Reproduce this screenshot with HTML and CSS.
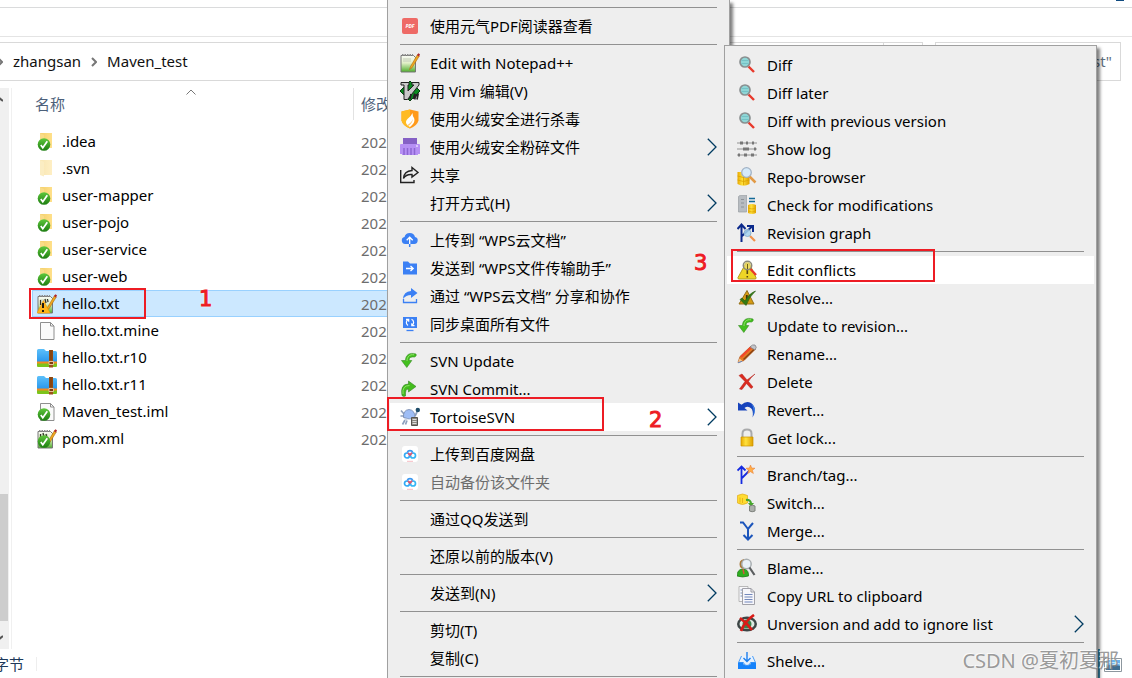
FILE: index.html
```html
<!DOCTYPE html>
<html lang="zh-CN">
<head>
    <meta charset="UTF-8">
    <meta name="viewport" content="width=device-width, initial-scale=1.0">
    <title>Maven_test</title>
    <link rel="stylesheet" href="styles.css">
</head>
<body>
    <!-- shared icons -->
    <svg class="sprite" aria-hidden="true">
        <defs>
            <linearGradient id="gFolder" x1="0" y1="0" x2="1" y2="0"><stop offset="0" stop-color="#f3cf6b"/><stop offset="1" stop-color="#ffe08a"/></linearGradient>
            <linearGradient id="gGreen" x1="0" y1="0" x2="0" y2="1"><stop offset="0" stop-color="#5fc83c"/><stop offset="1" stop-color="#1d7d12"/></linearGradient>
            <linearGradient id="gGold" x1="0" y1="0" x2="1" y2="0"><stop offset="0" stop-color="#e8a800"/><stop offset=".4" stop-color="#ffe13d"/><stop offset="1" stop-color="#e0a000"/></linearGradient>
            <linearGradient id="gBlue" x1="0" y1="0" x2="0" y2="1"><stop offset="0" stop-color="#5cc0fa"/><stop offset="1" stop-color="#2a97ec"/></linearGradient>
            <linearGradient id="gNote" x1="0" y1="0" x2="0" y2="1"><stop offset="0" stop-color="#f8faf4"/><stop offset=".45" stop-color="#e2f0c8"/><stop offset="1" stop-color="#4fae2c"/></linearGradient>
        </defs>
        <symbol id="check" viewBox="0 0 20 20">
            <circle cx="7" cy="12.500" r="6.300" fill="url(#gGreen)"/>
            <path d="M3.800 13l2 2.800L10.300 9.200" fill="none" stroke="#fff" stroke-width="1.700"/>
        </symbol>
        <symbol id="folder" viewBox="0 0 20 20">
            <path d="M3 1h12v15H3z" fill="url(#gFolder)"/>
            <path d="M3 1l4 2v14.500L3 16z" fill="#f9dc88"/>
        </symbol>
        <symbol id="page" viewBox="0 0 20 20">
            <path d="M3.500 1.500h10l3.500 3.500v13.500H3.500z" fill="#fafafa" stroke="#8e8e8e"/>
            <path d="M13.500 1.500V5H17" fill="none" stroke="#8e8e8e"/>
        </symbol>
        <symbol id="npp" viewBox="0 0 20 20">
            <path d="M1 2.500h12.500l2 2V19H1z" fill="url(#gNote)" stroke="#777"/>
            <path d="M2 2h11" stroke="#8c8c8c" stroke-width="2" stroke-dasharray="1.500 1"/>
            <path d="M3 6h8M3 8h8" stroke="#c2cab8"/>
            <path d="M17.500 1.500L10.500 13.500l-1 3 2.500-1.700L19.300 3z" fill="#f0a81f" stroke="#a96c10" stroke-width=".6"/>
            <path d="M17 2.200l1.300-2 1.700 1-1 2.200z" fill="#b0272f"/>
        </symbol>
        <symbol id="zip" viewBox="0 0 20 20">
            <path d="M0 2.500Q0 1 1.500 1H7l2 2h9.500Q20 3 20 4.500V14H0z" fill="url(#gBlue)"/>
            <path d="M0 13.500h20V16H0z" fill="#f58a1f"/>
            <path d="M0 15.500h20V18q0 1-1 1H1q-1 0-1-1z" fill="#7cc41c"/>
            <path d="M12 2h4v17.500h-4z" fill="#9c5218"/>
            <path d="M12.500 3h3M12.500 5h3M12.500 7h3M12.500 9h3M12.500 11h3" stroke="#693209" stroke-width=".8"/>
            <path d="M12 13.500h4.500v3H12z" fill="#7c3b0c" stroke="#e6c39b"/>
        </symbol>
        <symbol id="lens" viewBox="0 0 20 20">
            <path d="M11.500 11.500l5.500 5.500" stroke="#e8392b" stroke-width="2.400"/>
            <circle cx="8" cy="7" r="5" fill="#8fd6d6" stroke="#8a8f90" stroke-width="1.700"/>
            <path d="M4.500 5.500h7M4.500 8.500h7" stroke="#74c2c6"/>
        </symbol>
        <symbol id="arrowDown" viewBox="0 0 20 20">
            <path d="M16 3C9.500 1 5.500 4 5.500 9.500H1.500l5.300 7 5-7H9c0-3 2-4 5.500-3.500q2.500-1 1.500-3z" fill="#43c01e" stroke="#368c24" stroke-width=".6"/>
            <path d="M14 3.800C9.500 3 7 6 7 10" fill="none" stroke="#8fe168"/>
        </symbol>
        <symbol id="baidu" viewBox="0 0 20 20">
            <rect x="2" y="2" width="16" height="16" rx="3" fill="#fff"/>
            <circle cx="7" cy="11.500" r="2.500" fill="none" stroke="#31a9f5" stroke-width="1.700"/>
            <circle cx="13" cy="11.500" r="2.500" fill="none" stroke="#35b6f5" stroke-width="1.700"/>
            <path d="M7.200 8.500A3 3 0 0 1 12.800 8.500" fill="none" stroke="#3b97f0" stroke-width="1.700"/>
            <path d="M8 9L10 11 12 8.800" fill="none" stroke="#f34e65" stroke-width="1.700"/>
            <path d="M7 17.300h6" stroke="#f5bcc3"/>
        </symbol>
        <symbol id="chevron" viewBox="0 0 10 18">
            <path d="M.8 .8L9 9 .8 17.200" fill="none" stroke="#003b61" stroke-width="1.300"/>
        </symbol>
    </svg>

    <div class="tabs"><span class="help"></span></div>
    <div class="ribbon"></div>
    <div class="navbar">
        <nav class="address">
            <svg class="crumb first" viewBox="0 0 6 10"><path d="M1 1l4 4-4 4"/></svg>
            <a href="#">zhangsan</a>
            <svg class="crumb" viewBox="0 0 6 10"><path d="M1 1l4 4-4 4"/></svg>
            <a href="#">Maven_test</a>
            <button class="refresh" type="button" aria-label="refresh"></button>
        </nav>
        <input class="search" type="text" value="st&quot;" aria-label="search">
    </div>

    <main class="explorer">
        <div class="scrollbar">
            <svg class="scroll-arrow" viewBox="0 0 10 6"><path d="M0 5l5-4 5 4"/></svg>
            <div class="thumb"></div>
            <svg class="scroll-arrow" viewBox="0 0 10 6"><path d="M0 1l5 4 5-4"/></svg>
        </div>
        <div class="list">
            <table class="files">
                <thead>
                    <tr>
                        <th class="col-name"><div class="head">名称<svg class="sort" viewBox="0 0 10 6"><path d="M.5 5.500L5 1l4.500 4.500"/></svg></div></th>
                        <th><div class="head">修改</div></th>
                    </tr>
                </thead>
                <tbody>
                    <tr><td><svg class="icon"><use href="#folder"/><use href="#check"/></svg>.idea</td><td>202</td></tr>
                    <tr><td><svg class="icon faded"><use href="#folder"/></svg>.svn</td><td>202</td></tr>
                    <tr><td><svg class="icon"><use href="#folder"/><use href="#check"/></svg>user-mapper</td><td>202</td></tr>
                    <tr><td><svg class="icon"><use href="#folder"/><use href="#check"/></svg>user-pojo</td><td>202</td></tr>
                    <tr><td><svg class="icon"><use href="#folder"/><use href="#check"/></svg>user-service</td><td>202</td></tr>
                    <tr><td><svg class="icon"><use href="#folder"/><use href="#check"/></svg>user-web</td><td>202</td></tr>
                    <tr class="selected"><td><svg class="icon"><use href="#npp"/><path d="M6.500 6.500L13 19H0z" fill="#ffb51c" stroke="#f59a00" stroke-width=".6"/><path d="M6 9v5M6 16v2" stroke="#201a10" stroke-width="2"/><path d="M3.500 6v5M8 5l1 4M10.500 5l.5 3" stroke="#322f23" stroke-width="1.200"/></svg>hello.txt</td><td>202</td></tr>
                    <tr><td><svg class="icon"><use href="#page"/></svg>hello.txt.mine</td><td>202</td></tr>
                    <tr><td><svg class="icon"><use href="#zip"/></svg>hello.txt.r10</td><td>202</td></tr>
                    <tr><td><svg class="icon"><use href="#zip"/></svg>hello.txt.r11</td><td>202</td></tr>
                    <tr><td><svg class="icon"><use href="#page"/><use href="#check"/></svg>Maven_test.iml</td><td>202</td></tr>
                    <tr><td><svg class="icon"><use href="#npp"/><path d="M3.500 5v4M6 4l1 4M9 5l1 4" stroke="#2e3b22" stroke-width="1.300"/><use href="#check"/></svg>pom.xml</td><td>202</td></tr>
                </tbody>
            </table>
        </div>
    </main>
    <footer class="status">
        <span class="bytes">字节</span>
        <div class="view-mode">
            <svg viewBox="0 0 18 14"><path d="M.5 .5h17v13H.5z" fill="#fff" stroke="#8d979e"/><path d="M2 2h14v10H2z" fill="#66b5ec"/><path d="M2 8q6-3 14 0v4H2z" fill="#3f6f91"/><path d="M2 6q5-3 14 0" stroke="#d7f0ff" fill="none"/></svg>
        </div>
    </footer>

    <!-- context menu -->
    <div class="menu menu-main">
        <hr>
        <button type="button"><svg class="icon"><rect x="2" y="2" width="16" height="16" rx="2" fill="#ee6a66"/><text x="10" y="12" class="pdf">PDF</text></svg>使用元气PDF阅读器查看</button>
        <hr>
        <button type="button"><svg class="icon"><use href="#npp"/></svg>Edit with Notepad++</button>
        <button type="button"><svg class="icon"><path d="M10 0l10 10-10 10L0 10z" fill="#0b8a20" stroke="#0a3c12"/><path d="M1 1.500h8v2.500H8v6L14 4h-2V1.500h7V4L7.500 18.500H4V4H1z" fill="#c9c9c9" stroke="#222"/><path d="M11 13l-1 5M13.500 18l1-4.500 1.500 1 2-1-1 5M15.500 14.500l-.8 4" fill="none" stroke="#222" stroke-width="1.700"/></svg>用 Vim 编辑(V)</button>
        <button type="button"><svg class="icon"><path d="M10 .5l8.500 2v9Q17 17 10 19.500 3 17 1.500 11.500v-9z" fill="#ff9a1c"/><path d="M10 .5L1.500 2.500v9Q3 17 10 19.500z" fill="#ffbb24"/><path d="M12.500 4q0 3 1.500 5c1.500 3.500-1 6.500-4 9-4.500-2.500-5-5.500-2.500-8Q11 7.500 12.500 4z" fill="#fff"/><path d="M13 9.500q-.5 4.500-4.500 7.500l-1-1q4.500-3 5.500-6.500z" fill="#ffc875"/></svg>使用火绒安全进行杀毒</button>
        <button type="button"><svg class="icon"><path d="M3 1h14v7H3z" fill="#8560c5"/><path d="M1 7h18q1 0 1 1v9h-2v1H2v-1H0V8q0-1 1-1z" fill="#b690f4"/><path d="M4 11v7M7.500 11v7M11 11v7M14.500 11v7" stroke="#8d66d2" stroke-width="1.500"/><path d="M16 9h2" stroke="#fff"/></svg>使用火绒安全粉碎文件<svg class="arrow"><use href="#chevron"/></svg></button>
        <button type="button"><svg class="icon"><path d="M.7 5v12.500H14V15" fill="none" stroke="#222" stroke-width="1.400"/><path d="M12 2.500L18 7.500 12 12V9.500Q6 9 3.500 13.500 4 6 12 5.500z" fill="none" stroke="#222" stroke-width="1.400"/></svg>共享</button>
        <button type="button"><span class="icon"></span>打开方式(H)<svg class="arrow"><use href="#chevron"/></svg></button>
        <hr>
        <button type="button"><svg class="icon"><path d="M5.500 14a3.500 3.500 0 0 1-1-6.900 5.400 5.400 0 0 1 10.500 0A3.500 3.500 0 0 1 14 14z" fill="#3b80f4"/><path d="M9.700 14V7.500M6.700 10.200l3-3 3 3" fill="none" stroke="#fff" stroke-width="1.300"/><path d="M9.700 14v3" stroke="#3b80f4" stroke-width="1.500"/></svg>上传到 “WPS云文档”</button>
        <button type="button"><svg class="icon"><path d="M3 3.500h5l2 2h7v11H3z" fill="#3b80f4"/><path d="M6 10.500h7M10.500 8l2.700 2.500-2.700 2.500" fill="none" stroke="#fff" stroke-width="1.300"/></svg>发送到 “WPS文件传输助手”</button>
        <button type="button"><svg class="icon"><path d="M11 2l6.500 5L11 12V9Q6 9 3 13 3.500 5.500 11 5z" fill="#3b80f4"/><path d="M3.500 13v3.500h13V13" fill="none" stroke="#3b80f4" stroke-width="1.300"/></svg>通过 “WPS云文档” 分享和协作</button>
        <button type="button"><svg class="icon"><path d="M3 3h14v11H3z" fill="#3b80f4"/><path d="M6.500 16.500h7" stroke="#3b80f4" stroke-width="1.300"/><path d="M8 11.500A3.500 3.500 0 0 1 8.500 5.300M11.500 5.300A3.500 3.500 0 0 1 12 11.500M6 5.300h2.700v2.500M14.500 11.700h-2.700V9.300" fill="none" stroke="#fff" stroke-width="1.200"/></svg>同步桌面所有文件</button>
        <hr>
        <button type="button"><svg class="icon"><use href="#arrowDown"/></svg>SVN Update</button>
        <button type="button"><svg class="icon"><path d="M2 16.500Q0 5 8.500 5V2L16 7.500 8.500 13V10Q5 9.500 5.500 17q-2 1-3.500-.5z" fill="#43bd1d" stroke="#347f25" stroke-width=".6"/><path d="M3 15Q2 6.500 9.500 6.500" fill="none" stroke="#8fe168"/></svg>SVN Commit...</button>
        <button type="button" class="active"><svg class="icon"><path d="M1 3.500l3.500 4M.5 9h4l2 3.500M5 13l-2.500 4.500M7 13.500l-1.500 4M15 9l2-4" fill="none" stroke="#8ea0bd" stroke-width="1.700"/><path d="M3.500 10.500Q3 3 9 2.500q6 .5 6 8-5.500 3-11.500 0z" fill="#9ebdf5" stroke="#7487a9" stroke-width=".8"/><path d="M4 11.500q5 2 10 0" stroke="#d5dff0" fill="none"/><circle cx="17.800" cy="3" r="2.200" fill="#1d4b68"/><path d="M11.500 10.500h6v8h-6z" fill="#8b8880" stroke="#55534e"/><path d="M12.500 12.500h4M12.500 14.500h4M12.500 16.500h4" stroke="#ddd"/></svg>TortoiseSVN<svg class="arrow"><use href="#chevron"/></svg></button>
        <hr>
        <button type="button"><svg class="icon"><use href="#baidu"/></svg>上传到百度网盘</button>
        <button type="button" disabled><svg class="icon"><use href="#baidu"/></svg>自动备份该文件夹</button>
        <hr>
        <button type="button"><span class="icon"></span>通过QQ发送到</button>
        <hr>
        <button type="button"><span class="icon"></span>还原以前的版本(V)</button>
        <hr>
        <button type="button"><span class="icon"></span>发送到(N)<svg class="arrow"><use href="#chevron"/></svg></button>
        <hr>
        <button type="button"><span class="icon"></span>剪切(T)</button>
        <button type="button"><span class="icon"></span>复制(C)</button>
        <hr>
    </div>

    <!-- TortoiseSVN submenu -->
    <div class="menu menu-sub">
        <button type="button"><svg class="icon"><use href="#lens"/></svg>Diff</button>
        <button type="button"><svg class="icon"><use href="#lens"/></svg>Diff later</button>
        <button type="button"><svg class="icon"><use href="#lens"/></svg>Diff with previous version</button>
        <button type="button"><svg class="icon"><path d="M0 4h20M0 10h20M0 16h20" stroke="#929292" stroke-width="1.200"/><path d="M3 4h3M9 4h2M15 4h2M6 10h6M17 10h2M1 16h2M7 16h3M14 16h3" stroke="#777" stroke-width="3"/></svg>Show log</button>
        <button type="button"><svg class="icon"><path d="M.5 5v12q6 3.500 12 0V5z" fill="url(#gGold)"/><path d="M.5 9q6 3 12 0M.5 13q6 3 12 0M6.500 9v9" fill="none" stroke="#dba200" stroke-width=".8"/><path d="M12 9l6.500 6.500" stroke="#e29a46" stroke-width="2.500"/><circle cx="9.500" cy="5.500" r="4.800" fill="#d5eafa" stroke="#a2b2c4" stroke-width="1.300"/></svg>Repo-browser</button>
        <button type="button"><svg class="icon"><path d="M1.500 1.500l2-1.500h6v17h-8z" fill="#b7bcc1" stroke="#989da2" stroke-width=".7"/><path d="M4 4.500h3M4 8h3M4 12h3" stroke="#8c9298" stroke-width="1.200"/><path d="M12 3.500h6M12 6.500h6" stroke="#136a98" stroke-width="1.500"/><path d="M11 10v8q4 2 8 0v-8q-4-2-8 0z" fill="url(#gGold)"/><path d="M11 13q4 2 8 0M11 16q4 2 8 0" stroke="#dda600" fill="none" stroke-width=".7"/></svg>Check for modifications</button>
        <button type="button"><svg class="icon"><path d="M4.500 19V2M.5 6l4-4.500L8.500 6M5 13l10-9.500M10 3h6v6" fill="none" stroke="#0c2a8c" stroke-width="2"/><path d="M13 13l5 5" stroke="#f0924a" stroke-width="2.200"/><circle cx="10.500" cy="10" r="3.500" fill="#a4d3ef" fill-opacity=".85" stroke="#8fb4cf"/></svg>Revision graph</button>
        <hr>
        <button type="button" class="active"><svg class="icon"><path d="M9 3L1 17.500q-.5 1.500 1 1.500h16q1.500 0 1-1.500L12 3z" fill="#eed526" stroke="#b39c20"/><path d="M10.300 9v5M10.300 16v1.500" stroke="#5a4a10" stroke-width="1.600"/><circle cx="10.500" cy="5.500" r="4.200" fill="#ece187" fill-opacity=".6" stroke="#8a8a7a" stroke-width="1.500"/><path d="M10.500 4v5" stroke="#6a5d19"/><path d="M13.500 9l5.500 6" stroke="#e73a2b" stroke-width="2.300"/></svg>Edit conflicts</button>
        <button type="button"><svg class="icon"><path d="M10 2.500L17 16H2z" fill="#d59a13" stroke="#947019"/><path d="M9.800 7v4" stroke="#3f300c" stroke-width="1.800"/><path d="M3 11.500l2-1.500 3 3Q12 5.500 18.500 3 12 9 9 17.500z" fill="#357a13" stroke="#225a0c" stroke-width=".6"/></svg>Resolve...</button>
        <button type="button"><svg class="icon"><use href="#arrowDown"/></svg>Update to revision...</button>
        <button type="button"><svg class="icon"><path d="M1 18.500l2-6L14 2l4.500 3L7 16.500z" fill="#e57a22" stroke="#a74d13" stroke-width=".7"/><path d="M4 13L14 3.500" stroke="#f3452c" stroke-width="2"/><path d="M6.500 15.500L17 5.500" stroke="#8a4312" stroke-width="1.500"/><path d="M13 3q2.500-3 5-2 2.500 2 0 5z" fill="#c2c4c9" stroke="#7c7c82" stroke-width=".7"/><path d="M1 18.500l1.500-4 3 2.500z" fill="#f2c893"/><path d="M1 18.800l4-1.500" stroke="#6886bd"/></svg>Rename...</button>
        <button type="button"><svg class="icon"><path d="M2 3.500L5 2l5 6 8-6q-5 4-6.500 7.500L16 15l-2 1.500-4.500-5L5 17.500 2.500 17 8 9.500z" fill="#db2b20" stroke="#b31c17" stroke-width=".5"/></svg>Delete</button>
        <button type="button"><svg class="icon"><path d="M1 2.500l3.500 2.200Q9 .5 14 3q7 5 1.500 14.500Q17 9 12.500 7.200 9.800 6.200 7.500 8l3 2.500H1z" fill="#1743bc"/><path d="M14.500 4q6 5 1.500 12 2-7-1.500-12" fill="#4085e7"/></svg>Revert...</button>
        <button type="button"><svg class="icon"><path d="M5.500 10V5.500q0-4 4.500-4t4.500 4V10" fill="none" stroke="#a9aaab" stroke-width="2"/><path d="M4 9h12v9H4z" fill="url(#gGold)" stroke="#ca9300" stroke-width=".7"/></svg>Get lock...</button>
        <hr>
        <button type="button"><svg class="icon"><path d="M4.500 19V2M.5 5.500l4-4 4 4M5 13l8-8" fill="none" stroke="#152be0" stroke-width="1.800"/><path d="M13.500 0l1.200 3 3.300.2-2.600 2 1 3.300-2.900-1.800-2.900 1.800 1-3.300-2.600-2 3.300-.2z" fill="#ffad47" stroke="#e87b32" stroke-width=".5"/></svg>Branch/tag...</button>
        <button type="button"><svg class="icon"><path d="M.5 2.500v7.500q5 3 10 0V2.500q-5-3-10 0z" fill="#ffdc31" stroke="#dfaa1c" stroke-width=".7"/><path d="M3 4.500v5M5.500 5v5" stroke="#e8b318"/><path d="M9 7q5-.5 5 4" fill="none" stroke="#46a62c" stroke-width="2.200"/><path d="M11 10h6l-3 4z" fill="#46a62c"/><path d="M12.500 13v5q2.500 1.500 5.500 0v-5q-2.500-1.500-5.500 0z" fill="#adb0ac" stroke="#7d817c"/></svg>Switch...</button>
        <button type="button"><svg class="icon"><path d="M3 1.500h3L11 8l5-6M11 8v10M6.500 14l4.500 4.500L15.500 14" fill="none" stroke="#1c55bb" stroke-width="2"/></svg>Merge...</button>
        <hr>
        <button type="button"><svg class="icon"><path d="M0 18q0-6 5-7h3q4 2 3.500 7-6 2-11.500 0z" fill="#2fae20" stroke="#1d7217" stroke-width=".7"/><path d="M6 11l1 5" stroke="#d7523d" stroke-width="1.500"/><path d="M3 9Q1 2 7 1l2 8q-3 3-6 0z" fill="#a8793c"/><circle cx="9.500" cy="6" r="4.700" fill="#eaf1f7" stroke="#a9aeb1" stroke-width="1.500"/><path d="M12.500 9.500l5 7.500" stroke="#5b5e60" stroke-width="2.200"/></svg>Blame...</button>
        <button type="button"><svg class="icon"><path d="M2 .5h9v15H2z" fill="#f7f7fa" stroke="#aaa" stroke-width=".8"/><path d="M3.500 4h2M3.500 7h2M3.500 10h2" stroke="#7990ba"/><path d="M5.500 2.500h8.500l3.500 3.500v12.500h-12z" fill="#f6f6fb" stroke="#9899a0" stroke-width=".9"/><path d="M14 2.500V6h3.500" fill="none" stroke="#9899a0"/><path d="M7.500 8.500h8M7.500 11h8M7.500 13.500h8M7.500 16h8" stroke="#7288bc"/></svg>Copy URL to clipboard</button>
        <button type="button"><svg class="icon"><ellipse cx="10" cy="10" rx="10" ry="7.500" fill="#3d4646"/><ellipse cx="10" cy="10" rx="7.500" ry="5" fill="#dde9e1"/><circle cx="10" cy="10" r="4.500" fill="#39824b"/><path d="M3 4q7 5 12 12M17 1Q8 7 4 17" fill="none" stroke="#d91b17" stroke-width="2.700"/></svg>Unversion and add to ignore list<svg class="arrow"><use href="#chevron"/></svg></button>
        <hr>
        <button type="button"><svg class="icon"><path d="M4.500 5L1.500 11.500h5q.5 3 3.500 3t3.500-3h5L15.500 5" fill="#e7f2fe" stroke="#4b9df5"/><path d="M10 1v9M6.500 7L10 10.500 13.500 7" fill="none" stroke="#1d7fee" stroke-width="1.400"/><path d="M1 11.500h5q0 3 4 3t4-3h5V18H1z" fill="#1683fb"/></svg>Shelve...</button>
    </div>

    <!-- step marks -->
    <div class="mark mark-file"></div>
    <div class="mark mark-svn"></div>
    <div class="mark mark-edit"></div>
    <span class="step step-1">1</span>
    <span class="step step-2">2</span>
    <span class="step step-3">3</span>
    <div class="watermark">CSDN @夏初夏那</div>
</body>
</html>
```

FILE: styles.css
```css
* {
    margin: 0;
    padding: 0;
    box-sizing: border-box;
}
body {
    font-family: "Noto Sans", "Noto Sans CJK SC", sans-serif;
    font-size: 15px;
    line-height: 20px;
    color: #000;
    background: #fff;
    min-height: 100vh;
    display: flex;
    flex-direction: column;
    position: relative;
    overflow: hidden;
}
button, input {
    font: inherit;
    color: inherit;
    background: none;
    border: none;
}
.sprite {
    position: absolute;
    width: 0;
    height: 0;
}
.icon {
    width: 20px;
    height: 20px;
    flex: none;
}

/* Window top */
.tabs {
    height: 8px;
    border-bottom: 1px solid #dadbdc;
    display: flex;
    justify-content: flex-end;
}
.help {
    width: 8px;
    height: 1px;
    margin-right: 8px;
    background: #0f4a80;
}
.ribbon {
    height: 29px;
    border-bottom: 1px solid #e4e4e4;
}
.navbar {
    display: flex;
    gap: 12px;
    padding: 5px 11px 7px 0;
}
.address {
    flex: 1;
    height: 39px;
    display: flex;
    align-items: center;
    border: 1px solid #d9d9d9;
    border-left: none;
}
.address a {
    padding-bottom: 2px;
    color: #111;
    text-decoration: none;
}
.crumb {
    width: 6px;
    height: 10px;
    margin: 0 10px;
    fill: none;
    stroke: #777;
    stroke-width: 2;
}
.crumb.first {
    margin: 0 10px 0 -3px;
}
.refresh {
    width: 39px;
    height: 100%;
    margin-left: auto;
    border-left: 1px solid #d9d9d9;
}
.search {
    width: 186px;
    padding: 0 8px 2px;
    border: 1px solid #d9d9d9;
    text-align: right;
    color: #5f6f80;
}

/* File list */
.explorer {
    flex: 1;
    display: flex;
}
.scrollbar {
    width: 9px;
    background: #f0f0f0;
    display: flex;
    flex-direction: column;
    justify-content: space-between;
    padding: 8px 1px 8px 0;
}
.scroll-arrow {
    width: 10px;
    height: 6px;
    margin-left: -7px;
    fill: none;
    stroke: #555;
    stroke-width: 2;
}
.thumb {
    height: 127px;
    margin-top: auto;
    margin-bottom: 14px;
    background: #cdcdcd;
}
.list {
    flex: 1;
    margin-left: 2px;
    padding: 0 60px 0 20px;
    border-left: 1px solid #f0f0f0;
}
.files {
    width: 100%;
    table-layout: fixed;
    border-collapse: collapse;
}
.files th {
    height: 40px;
    font-weight: normal;
    text-align: left;
    vertical-align: top;
    color: #4c607a;
}
.col-name {
    width: 322px;
}
.head {
    height: 32px;
    line-height: 32px;
    padding-left: 7px;
    position: relative;
}
.col-name .head {
    padding-left: 3px;
    border-right: 1px solid #e2e2e2;
}
.sort {
    position: absolute;
    top: 1px;
    left: 50%;
    width: 10px;
    height: 6px;
    margin-left: -7px;
    fill: none;
    stroke: #777;
}
.files td {
    height: 27px;
    padding-left: 7px;
    color: #6d6d6d;
}
.files td:first-child {
    padding-left: 5px;
    color: #000;
}
.files .icon {
    margin-right: 5px;
    vertical-align: -5px;
}
.faded {
    opacity: 0.5;
}
.selected {
    background: #cce8ff;
    outline: 1px solid #99d1ff;
    outline-offset: -1px;
}

/* Status bar */
.status {
    height: 29px;
    display: flex;
    align-items: center;
    justify-content: space-between;
    color: #1e395b;
}
.bytes {
    margin-left: -6px;
    padding-right: 12px;
    line-height: 14px;
    border-right: 1px solid #eee;
}
.view-mode {
    align-self: stretch;
    padding: 7px 9px 0 4px;
    width: 34px;
    border-left: 2px solid #3991b5;
}
.view-mode svg {
    width: 18px;
    height: 14px;
}

/* Context menus */
.menu {
    position: absolute;
    display: flex;
    flex-direction: column;
    background: #eee;
    border: 1px solid #a0a0a0;
    box-shadow: 3px 3px 3px rgba(0, 0, 0, 0.5);
}
.menu-main {
    top: 0;
    left: 387px;
    width: 343px;
    padding: 3px 2px;
    border-top: none;
}
.menu-sub {
    top: 45px;
    bottom: -8px;
    left: 724px;
    width: 373px;
    padding: 5px 2px;
}
.menu button {
    display: flex;
    align-items: center;
    gap: 10px;
    height: 28px;
    padding: 0 10px;
    text-align: left;
    white-space: nowrap;
}
.menu button:hover, .menu .active {
    background: #fff;
}
.menu button:disabled {
    color: #6d6d6d;
}
.menu hr {
    height: 1px;
    margin: 4px 10px;
    border: none;
    background: #919191;
}
.arrow {
    width: 10px;
    height: 18px;
    margin-left: auto;
}
.pdf {
    font-size: 5px;
    font-weight: bold;
    font-style: italic;
    fill: #fff;
    text-anchor: middle;
}

/* Step marks */
.mark {
    position: absolute;
    border: 2px solid #ed1c24;
}
.mark-file {
    top: 288px;
    left: 29px;
    width: 117px;
    height: 31px;
}
.mark-svn {
    top: 397px;
    left: 387px;
    width: 217px;
    height: 34px;
}
.mark-edit {
    top: 249px;
    left: 731px;
    width: 204px;
    height: 33px;
}
.step {
    position: absolute;
    font-family: "DejaVu Sans", sans-serif;
    font-size: 21px;
    line-height: 24px;
    color: #ed1c24;
    -webkit-text-stroke: 1px #ed1c24;
    text-shadow: 0 0 2px #fff, 0 0 3px #fff;
}
.step-1 {
    top: 287px;
    left: 199px;
}
.step-2 {
    top: 408px;
    left: 649px;
}
.step-3 {
    top: 251px;
    left: 694px;
}
.watermark {
    position: absolute;
    right: 13px;
    bottom: 4px;
    font-size: 20px;
    line-height: 26px;
    color: rgba(130, 130, 130, 0.8);
    text-shadow: -1px -1px 0 rgba(255, 255, 255, 0.7);
}
```
